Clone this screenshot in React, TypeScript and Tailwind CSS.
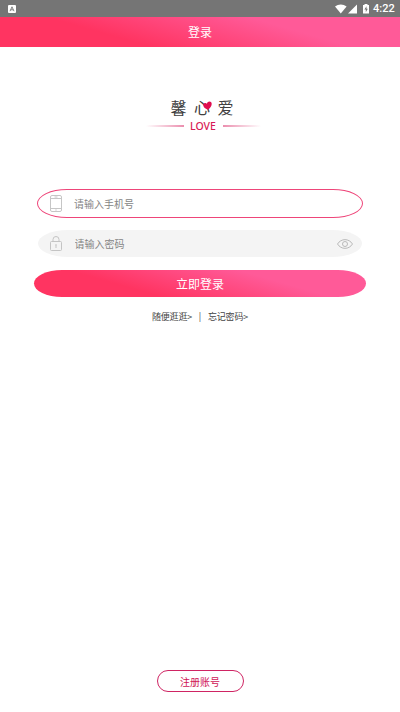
import { useState } from 'react';

const FONT = 'font-["Noto_Sans_CJK_SC",sans-serif]';
const PINK = 'bg-[linear-gradient(16deg,#ff3461_30%,#ff5a98_70%)]';

function StatusBar() {
  return (
    <div className="flex h-[17px] items-center bg-[#757575] pl-2 pr-[5px] text-white">
      <svg className="h-2 w-2" viewBox="0 0 8 8">
        <rect width="8" height="8" rx="1" fill="#fff" />
        <path d="M2 6.2 4 1.8l2 4.4M2.8 4.8h2.4" fill="none" stroke="#757575" strokeWidth="0.9" />
      </svg>
      {/* 信号与电量 */}
      <svg className="ml-auto h-[10px] w-[35px]" viewBox="0 0 35 10">
        <path d="M0 2.6C3.4-.3 8.2-.3 11.6 2.6L5.8 9.5z" fill="#fff" />
        <path d="M22 0.5v9h-9z" fill="#fff" />
        <path d="M28 1h1.500V0h3v1H34v8.600h-6z" fill="#fff" />
        <path d="M31.500 2.200 29.400 5.500h1.400v2.700l2-3.500h-1.300z" fill="#757575" />
      </svg>
      <span className="ml-[3px] w-[22px] whitespace-nowrap font-[Roboto,sans-serif] text-[11px] font-medium leading-[17px]">4:22</span>
    </div>
  );
}

function Logo() {
  return (
    <div className="mt-[50px] flex flex-col items-center">
      <div className="relative mr-[2px] flex h-[20px] w-[63px] items-center justify-between text-[16px] leading-[20px] text-[#404040]">
        <span>馨</span>
        <span>心</span>
        <span>爱</span>
        <svg className="absolute left-[32px] top-[4px] h-[9px] w-[9px]" viewBox="0 0 9 9">
          <path d="M5 8.800C1.800 7.500 0 5.700.2 3.700.5 1.800 3 1.300 3.900 2.800 4.400.4 7 -.3 8.200 1.300 9.600 3.400 7.800 6.500 5 8.800z" fill="#e00d50" />
        </svg>
      </div>
      <div className="mt-px flex items-center gap-[6px]">
        <i className="h-[2px] w-[38px] bg-linear-to-r from-transparent to-[#eb8eae]" />
        <span className="w-[27px] whitespace-nowrap text-center font-['Noto_Sans',sans-serif] text-[10.500px] font-medium leading-[16px] text-[#d81b56]">LOVE</span>
        <i className="h-[2px] w-[38px] bg-linear-to-l from-transparent to-[#eb8eae]" />
      </div>
    </div>
  );
}

export default function App() {
  const [phone, setPhone] = useState('');
  const [password, setPassword] = useState('');
  const [visible, setVisible] = useState(false);

  return (
    <div className={`flex h-[712px] w-[400px] flex-col overflow-hidden bg-white ${FONT}`}>
      <StatusBar />
      <header className={`flex h-[30px] items-center justify-center text-[12px] text-white ${PINK}`}>登录</header>

      <div className="pl-[6px]">
        <Logo />
      </div>

      {/* 登录表单 */}
      <form className="mt-[55px] flex flex-col items-center" onSubmit={(e) => e.preventDefault()}>
        <label className="flex h-[29px] w-[326px] items-center rounded-[30px/14.500px] border border-[#ee4579] pl-[12px]">
          <svg className="h-[17px] w-[12px]" viewBox="0 0 12 17" fill="none" stroke="#c6c6c6">
            <rect x="0.5" y="0.5" width="11" height="16" rx="1.5" />
            <path d="M.5 3.500h11M.5 13.500h11M4.500 2h3M5.300 15h1.400" />
          </svg>
          <input
            value={phone}
            onChange={(e) => setPhone(e.target.value)}
            placeholder="请输入手机号"
            className="ml-[12px] w-[220px] text-[10px] text-[#555] outline-none placeholder:text-[#858585]"
          />
        </label>

        <label className="mt-[12px] flex h-[27px] w-[324px] items-center rounded-[30px/13.500px] bg-[#f4f4f4] pl-[12px] pr-[9px]">
          <svg className="h-[15px] w-[12px]" viewBox="0 0 12 15" fill="none" stroke="#c4c4c4">
            <rect x="0.5" y="5.5" width="11" height="9" rx="1" />
            <path d="M3 5.500V3.500a3 3 0 0 1 6 0v2M6 9.500v2.500M5 9h2" />
          </svg>
          <input
            type={visible ? 'text' : 'password'}
            value={password}
            onChange={(e) => setPassword(e.target.value)}
            placeholder="请输入密码"
            className="ml-[12.500px] w-[220px] text-[10px] text-[#555] outline-none placeholder:text-[#858585]"
          />
          <button type="button" className="ml-auto" onClick={() => setVisible(!visible)}>
            <svg className="h-[10px] w-[16px]" viewBox="0 0 16 10" fill="none" stroke="#b9b9b9">
              <path d="M.5 5C4-.8 12-.8 15.500 5 12 10.800 4 10.800.5 5z" />
              <circle cx="8" cy="5" r="2.5" />
            </svg>
          </button>
        </label>

        <button className={`mt-[13px] h-[27px] w-[332px] rounded-[28px/13.500px] text-[12px] leading-[27px] text-white ${PINK}`}>
          立即登录
        </button>
      </form>

      <div className="mt-[13px] flex h-[14px] items-center justify-center text-[9px] leading-[14px] text-[#444]">
        <span className="w-[40px] whitespace-nowrap tracking-[-0.200px]">随便逛逛&gt;</span>
        <span className="mx-[6px] w-[4px] text-center">|</span>
        <span className="w-[40px] whitespace-nowrap tracking-[-0.200px]">忘记密码&gt;</span>
      </div>

      <button className="mx-auto mb-[20px] mt-auto h-[22px] w-[87px] rounded-full border border-[#cf2463] text-[10px] leading-[21px] text-[#cf1557]">
        注册账号
      </button>
    </div>
  );
}
